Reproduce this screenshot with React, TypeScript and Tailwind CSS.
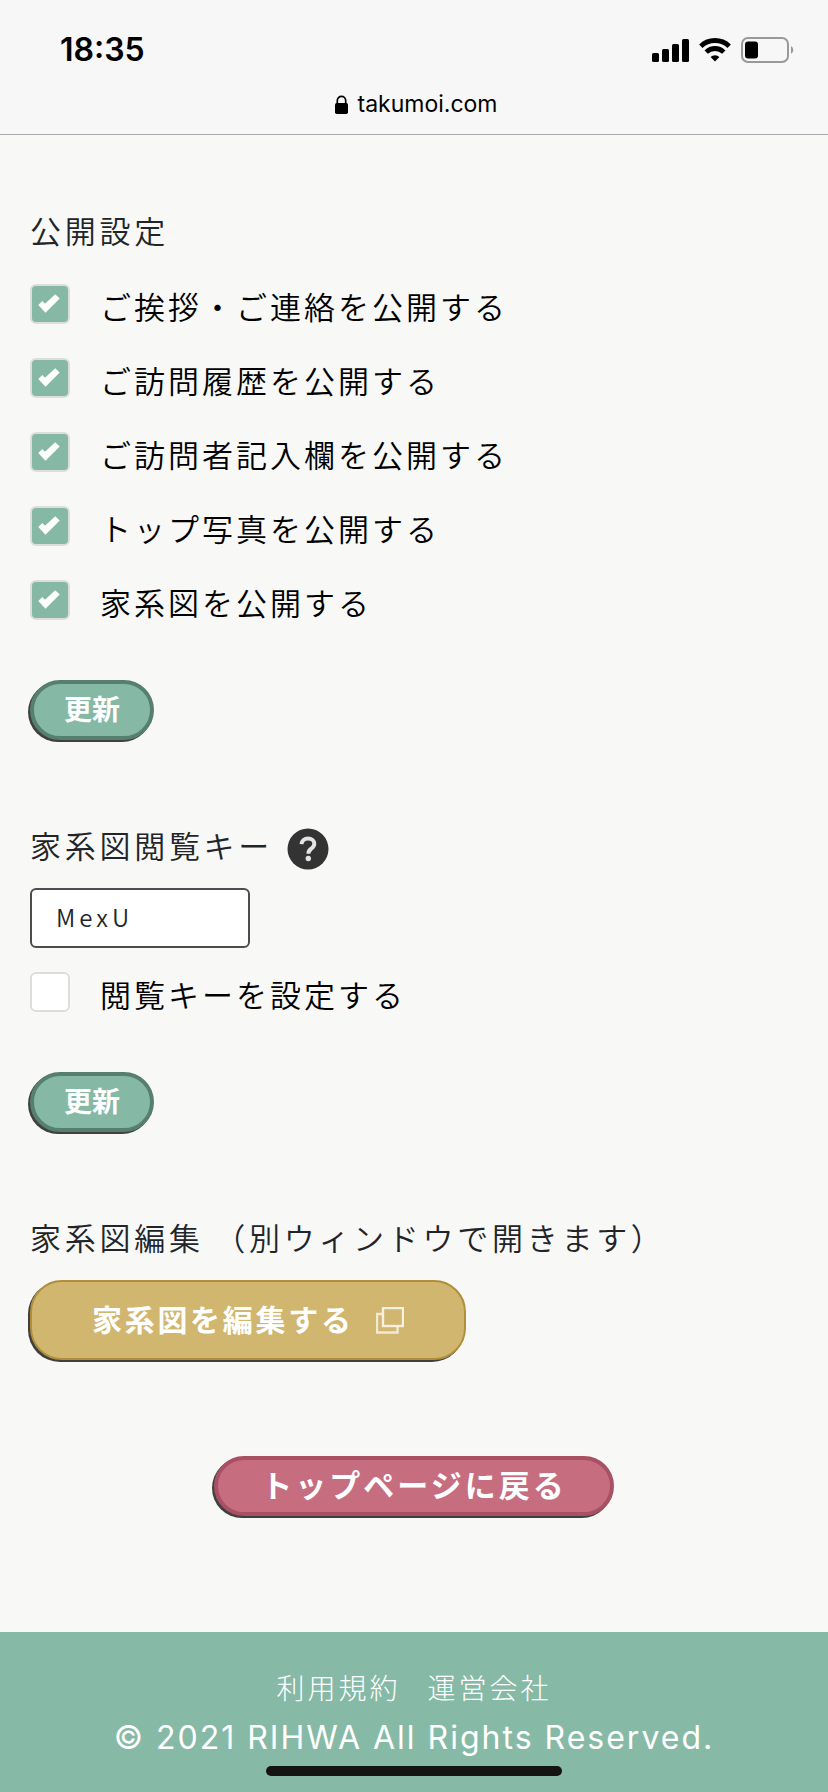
import { useState, type ReactNode } from "react";

const visibilityOptions = [
  "ご挨拶・ご連絡を公開する",
  "ご訪問履歴を公開する",
  "ご訪問者記入欄を公開する",
  "トップ写真を公開する",
  "家系図を公開する",
];

function StatusIcons() {
  return (
    <div className="flex items-center gap-[10px]">
      <svg width="37" height="24" viewBox="0 0 37 24" aria-hidden="true">
        <rect x="0" y="15" width="7" height="9" rx="1.5" />
        <rect x="10" y="11" width="7" height="13" rx="1.5" />
        <rect x="20" y="6" width="7" height="18" rx="1.5" />
        <rect x="30" y="1" width="7" height="23" rx="1.5" />
      </svg>
      <svg width="32" height="24" viewBox="0 0 32 24" aria-hidden="true">
        <g fill="none" stroke="#000" strokeWidth="4.8">
          <path d="M1.8 8.2A20.5 20.5 0 0 1 30.2 8.2" />
          <path d="M7.2 14.1A12.6 12.6 0 0 1 24.8 14.1" />
        </g>
        <path d="M16 23.6l-4.4-4.5a6.4 6.4 0 0 1 8.8 0z" />
      </svg>
      <svg width="53" height="26" viewBox="0 0 53 26" aria-hidden="true">
        <rect x="1" y="1" width="46" height="24" rx="6" fill="none" stroke="#999" strokeWidth="2" />
        <rect x="4" y="4.500" width="13" height="17" rx="3" />
        <path d="M50 9a4.600 4.600 0 0 1 0 8z" fill="#999" />
      </svg>
    </div>
  );
}

function Heading({ children }: { children: ReactNode }) {
  return (
    <h2 className="flex h-[46px] items-center pb-1 text-[31px] leading-[42px] font-[350] tracking-[0.12em] text-[#212529]">
      {children}
    </h2>
  );
}

function CheckRow({ label, initial }: { label: string; initial: boolean }) {
  const [checked, setChecked] = useState(initial);
  return (
    <label className="flex min-h-10 items-center gap-[30px]">
      <span className="relative size-10 shrink-0">
        <input
          type="checkbox"
          checked={checked}
          onChange={(e) => setChecked(e.target.checked)}
          className="block size-10 appearance-none rounded-[6px] border-2 border-[#dddddd] bg-white checked:bg-[#85b9a5]"
        />
        {checked && (
          <svg className="pointer-events-none absolute inset-0" width="40" height="40" viewBox="0 0 40 40" aria-hidden="true">
            <path d="M8.300 21L12.300 17L15 19.700L25.200 10.200L29.700 14.600L15.500 28.800Z" fill="#fff" />
          </svg>
        )}
      </span>
      <span className="pt-1 text-[31px] leading-8 font-[350] tracking-[3px] text-black">{label}</span>
    </label>
  );
}

function UpdateButton() {
  return (
    <button
      type="submit"
      className="mt-[60px] block h-[60px] w-[124px] rounded-full border-4 border-[#577f70] bg-[#85b9a5] pb-1 text-[28px] leading-[48px] font-bold text-white shadow-[-2px_2px_0_#404040]"
    >
      更新
    </button>
  );
}

export default function App() {
  const [key, setKey] = useState("MexU");
  return (
    <div className="flex min-h-screen flex-col bg-[#f8f8f7] font-['Noto_Sans_CJK_JP',sans-serif]">
      <header className="border-b border-[#aaaaaa] bg-[#f7f7f7] pt-7 pb-2 font-['Inter',sans-serif] text-black">
        <div className="flex h-11 items-center justify-between pr-[34px] pl-[60px]">
          <span className="text-[32px] font-semibold">18:35</span>
          <StatusIcons />
        </div>
        <div className="mt-[10px] flex h-11 items-center justify-center gap-[10px] pl-1">
          <svg width="13" height="19" viewBox="0 0 13 19" aria-hidden="true">
            <rect x="0" y="8" width="13" height="11" rx="1.800" />
            <path d="M2.300 9V5.500a4.200 4.200 0 0 1 8.400 0V9" fill="none" stroke="#000" strokeWidth="1.700" />
          </svg>
          <span className="text-[23px]">takumoi.com</span>
        </div>
      </header>

      <main className="flex-1 px-[30px] pt-[74px] pb-[116px]">
        <form onSubmit={(e) => e.preventDefault()}>
          <Heading>公開設定</Heading>
          <div className="mt-[29px] flex flex-col items-start gap-[34px]">
            {visibilityOptions.map((label) => (
              <CheckRow key={label} label={label} initial />
            ))}
          </div>
          <UpdateButton />
        </form>

        <form className="mt-[84px]" onSubmit={(e) => e.preventDefault()}>
          <Heading>
            <label htmlFor="view-key">家系図閲覧キー</label>
            <button type="button" aria-label="ヘルプ" className="ml-[14px] pt-2">
              <svg width="42" height="42" viewBox="0 0 42 42" aria-hidden="true">
                <circle cx="21" cy="21" r="20.500" fill="#333" />
                <path
                  d="M14.500 16.200C14.800 12.500 17.500 10.500 21 10.500c3.700 0 6.300 2.200 6.300 5.300 0 2.500-1.400 3.800-3.300 5.200-2 1.400-2.600 2.300-2.600 4.800"
                  fill="none"
                  stroke="#e4e4e4"
                  strokeWidth="4"
                />
                <circle cx="21.300" cy="30.500" r="2.700" fill="#e4e4e4" />
              </svg>
            </button>
          </Heading>
          <input
            id="view-key"
            type="text"
            value={key}
            onChange={(e) => setKey(e.target.value)}
            className="mt-[18px] mb-6 block h-[60px] w-[220px] rounded-[6px] border-2 border-[#4d4d4d] bg-white px-6 pb-1 text-[24px] font-[350] tracking-[4px] text-[#212529]"
          />
          <CheckRow label="閲覧キーを設定する" initial={false} />
          <UpdateButton />
        </form>

        <section className="mt-[84px]">
          <Heading>家系図編集 （別ウィンドウで開きます）</Heading>
          <a
            href="#edit"
            className="mt-[18px] flex h-20 w-[436px] items-center gap-[22px] rounded-[32px] border-2 border-[#b08f3c] bg-[#d0b66f] pl-[60px] text-[30px] font-bold tracking-[0.09em] text-white shadow-[-2px_2px_0_#404040]"
          >
            <span className="pb-1">家系図を編集する</span>
            <svg width="28" height="27" viewBox="0 0 28 27" fill="none" aria-hidden="true">
              <path d="M6 7H1V25.500H21.500V20" stroke="#fff" strokeOpacity=".7" strokeWidth="2.4" />
              <rect x="7" y="1" width="20" height="18" stroke="#fff" strokeOpacity=".8" strokeWidth="2.4" />
            </svg>
          </a>
        </section>

        <a
          href="#top"
          className="mx-auto mt-24 flex h-[60px] w-[400px] items-center justify-center rounded-full border-4 border-[#a85064] bg-[#c66e7f] pb-1 text-[31px] leading-[48px] font-bold tracking-[3px] text-white shadow-[-2px_2px_0_#404040]"
        >
          トップページに戻る
        </a>
      </main>

      <footer className="flex flex-col items-center bg-[#86baa6] pt-8 pb-4 text-white">
        <nav className="flex gap-[27px] text-[28px] leading-[46px] font-light tracking-[3px]">
          <a href="#terms">利用規約</a>
          <a href="#company">運営会社</a>
        </nav>
        <p className="mt-1 font-['Inter',sans-serif] text-[32px] leading-[48px] tracking-[2px]">© 2021 RIHWA All Rights Reserved.</p>
        <div className="mt-1 h-[10px] w-[296px] rounded-full bg-[#141414]" />
      </footer>
    </div>
  );
}
